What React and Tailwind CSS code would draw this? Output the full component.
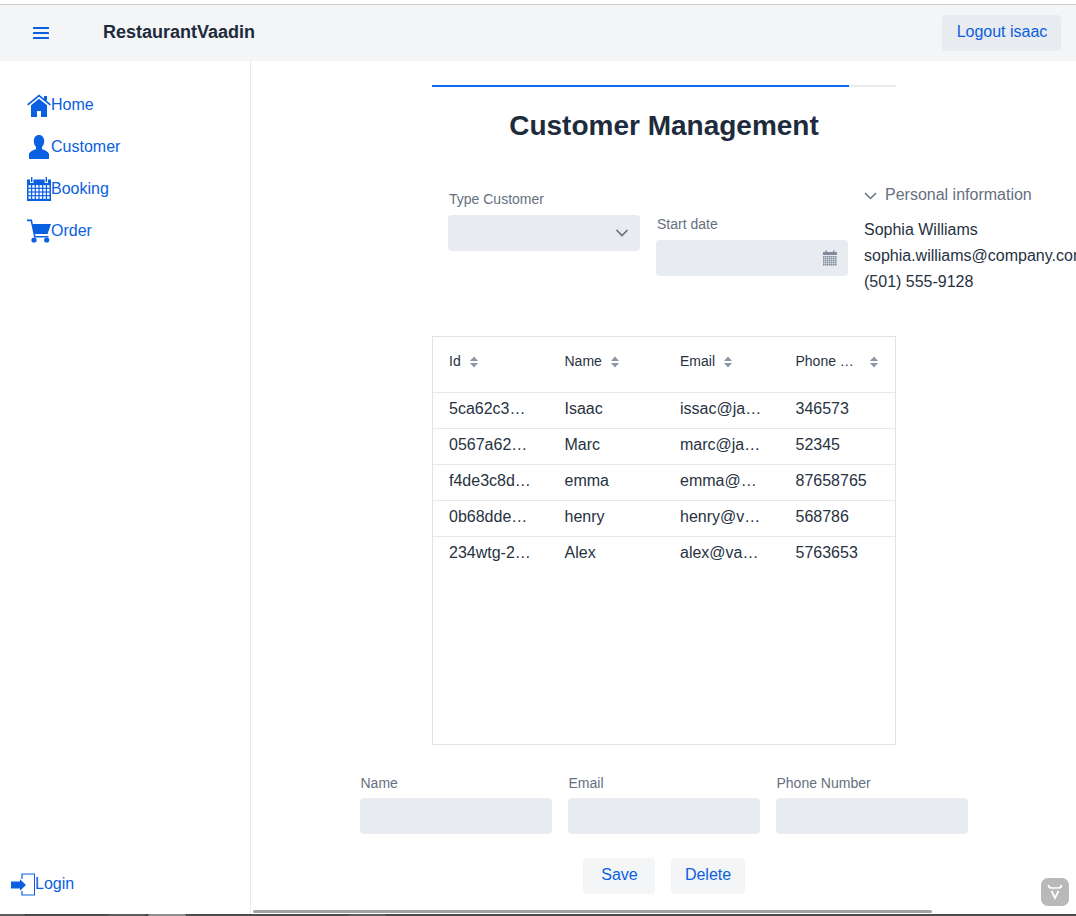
const blue = "#0a60e0";

function Field({ label, labelClass = "mb-[6px]", children }) {
  return (
    <div className="flex flex-col w-[192px]">
      <label className={`text-[14px] leading-[18px] text-[#667080] pl-[1px] ${labelClass}`}>{label}</label>
      <div className="h-[36px] rounded-[4px] bg-[#e8ebef] flex items-center justify-end pr-[11px]">{children}</div>
    </div>
  );
}

function Sort() {
  return (
    <svg width="8" height="12" viewBox="0 0 8 12" className="shrink-0" fill="#8b95a5">
      <path d="M4 0.5 8 5H0z" />
      <path d="M0 7h8l-4 4.500z" />
    </svg>
  );
}

const rows = [
  ["5ca62c3…", "Isaac", "issac@ja…", "346573"],
  ["0567a62…", "Marc", "marc@ja…", "52345"],
  ["f4de3c8d…", "emma", "emma@…", "87658765"],
  ["0b68dde…", "henry", "henry@v…", "568786"],
  ["234wtg-2…", "Alex", "alex@va…", "5763653"],
];

function Nav({ icon, label }) {
  return (
    <a className="flex items-center h-[42px] text-[16px] text-[#0a60e0]">
      {icon}
      <span>{label}</span>
    </a>
  );
}

const HomeI = (
  <svg width="24" height="24" viewBox="0 0 24 24" fill={blue}>
    <path d="M0.600 11.800 12 2.500l11.400 9.300" fill="none" stroke={blue} strokeWidth="1.700" />
    <rect x="17" y="3" width="3" height="4.500" />
    <path d="M12 5.800 20 12.300V24h-6v-6h-4v6H4V12.300z" />
  </svg>
);
const UserI = (
  <svg width="24" height="24" viewBox="0 0 24 24" fill={blue}>
    <path d="M12 0c3.200 0 5.200 2.600 5.200 6 0 2.600-.9 4.600-2.200 6v2.200c3 .9 6.300 2.200 7 4.800v5H2v-5c.7-2.600 4-3.900 7-4.800V12c-1.300-1.400-2.200-3.400-2.200-6 0-3.400 2-6 5.200-6z" />
  </svg>
);
const CalI = (
  <svg width="24" height="24" viewBox="0 0 24 24">
    <rect x="0" y="2.500" width="24" height="21.500" fill={blue} />
    <rect x="3" y="0" width="3.400" height="6" fill="white" />
    <rect x="17.600" y="0" width="3.400" height="6" fill="white" />
    <rect x="4" y="0" width="1.400" height="5" fill={blue} />
    <rect x="18.600" y="0" width="1.400" height="5" fill={blue} />
    {[8.200, 11.900, 15.600, 19.300].map((y) =>
      [1.500, 5.200, 8.900, 12.600, 16.300, 20].map((x) => (
        <rect key={`${x}-${y}`} x={x} y={y} width="2.500" height="2.500" fill="white" />
      ))
    )}
  </svg>
);
const CartI = (
  <svg width="24" height="24" viewBox="0 0 24 24" fill={blue}>
    <path d="M0 0.500h5l.8 4.500H24l-3.500 10H8l.5 2h13v1.600H7.200L3.700 2.200H0z" />
    <circle cx="7" cy="21" r="2.600" />
    <circle cx="19.700" cy="21" r="2.600" />
  </svg>
);
const LoginI = (
  <svg width="24" height="24" viewBox="0 0 24 24" fill={blue}>
    <path d="M0 9.500h9V7.300l6 5.700-6 5.700v-2.300H0z" />
    <path d="M11 7V2h12.600v21H11v-4" fill="none" stroke={blue} strokeWidth="1.200" />
  </svg>
);

export default function App() {
  return (
    <div className="w-[1076px] h-[916px] overflow-hidden flex flex-col bg-white font-['Liberation_Sans',sans-serif] text-[#27323f]">
      <div className="h-[5px] shrink-0 bg-white border-b border-[#c8c8c8]" />
      <header className="h-[56px] shrink-0 bg-[#f3f5f7] flex items-center">
        <button className="w-[26px] ml-[28px] flex justify-center">
          <svg width="18" height="14" viewBox="0 0 18 14" fill={blue}>
            <rect x="1" y="1" width="16" height="2" rx="0.500" />
            <rect x="1" y="6" width="16" height="2" rx="0.500" />
            <rect x="1" y="11" width="16" height="2" rx="0.500" />
          </svg>
        </button>
        <h1 className="ml-[49px] pb-[2px] text-[18px] font-bold leading-none text-[#1e2b3c]">RestaurantVaadin</h1>
        <button className="ml-auto mr-[15px] w-[119px] h-[36px] pb-[2px] pl-[1px] rounded-[4px] bg-[#e8ebef] text-[16px] text-[#0a60e0]">Logout isaac</button>
      </header>
      <div className="flex-1 flex min-h-0">
        <aside className="w-[251px] shrink-0 border-r border-[#e6e8eb] flex flex-col justify-between">
          <nav className="pt-[23px] pl-[27px]">
            <Nav icon={HomeI} label="Home" />
            <Nav icon={UserI} label="Customer" />
            <Nav icon={CalI} label="Booking" />
            <Nav icon={CartI} label="Order" />
          </nav>
          <div className="pl-[11px] pb-[9px]">
            <Nav icon={LoginI} label="Login" />
          </div>
        </aside>
        <main className="flex-1 min-w-0 relative overflow-hidden">
          <div className="ml-[181px] mt-[24px] w-[464px] h-[2px] bg-[#e8ebef]">
            <div className="h-full w-[417px] bg-[#0b6bf0]" />
          </div>
          <h2 className="mt-[21px] ml-[181px] w-[464px] text-center text-[28px] leading-[36px] font-bold text-[#1e2b3c]">Customer Management</h2>
          <div className="flex mt-[39px] ml-[197px] items-start w-[640px]">
            <div className="mt-[7px]">
              <Field label="Type Customer" labelClass="mb-[7px]">
                <svg width="14" height="8" viewBox="0 0 14 8" fill="none" stroke="#667080" strokeWidth="1.700"><path d="M1.500 1 7 6.500 12.500 1" /></svg>
              </Field>
            </div>
            <div className="ml-[16px] mt-[32px]">
              <Field label="Start date" labelClass="mb-[7px]">
                <svg width="16" height="17" viewBox="0 0 16 17" fill="#7f8a9a" className="-mr-[1px]">
                  <rect x="1" y="2" width="14" height="3" />
                  <rect x="3.500" y="0.500" width="1.500" height="2" />
                  <rect x="11" y="0.500" width="1.500" height="2" />
                  {[6, 8, 10, 12, 14].map((y) =>
                    [1, 3, 5, 7, 9, 11, 13].map((x) => (
                      <rect key={`${x}-${y}`} x={x} y={y} width="1.500" height="1.500" />
                    ))
                  )}
                </svg>
              </Field>
            </div>
            <div className="ml-[16px] w-[260px] shrink-0 whitespace-nowrap">
              <div className="flex items-center h-[24px] text-[16px] text-[#667080]">
                <svg width="13" height="8" viewBox="0 0 13 8" fill="none" stroke="#667080" strokeWidth="1.500" className="mr-[8px] mt-[2px]"><path d="M1 1 6.500 6.500 12 1" /></svg>
                Personal information
              </div>
              <div className="mt-[10px] text-[16px] leading-[26px]">
                <div>Sophia Williams</div>
                <div>sophia.williams@company.com</div>
                <div>(501) 555-9128</div>
              </div>
            </div>
          </div>
          <div className="ml-[181px] mt-[41px] w-[464px] h-[409px] border border-[#dfe2e7] text-[16px]">
            <div className="grid grid-cols-4 h-[56px] border-b border-[#e6e8eb] items-center text-[14px] pb-[6px]">
              <div className="flex items-center gap-[9px] pl-[16px]">Id <Sort /></div>
              <div className="flex items-center gap-[9px] pl-[16px]">Name <Sort /></div>
              <div className="flex items-center gap-[9px] pl-[16px]">Email <Sort /></div>
              <div className="flex items-center justify-between pl-[16px] pr-[17px]">Phone … <Sort /></div>
            </div>
            {rows.map((r, i) => (
              <div key={r[0]} className={`grid grid-cols-4 h-[36px] pb-[4px] items-center whitespace-nowrap ${i < 4 ? "border-b border-[#e6e8eb]" : ""}`}>
                {r.map((c) => <div key={c} className="pl-[16px]">{c}</div>)}
              </div>
            ))}
          </div>
          <div className="flex justify-center gap-[16px] mt-[29px] w-[825px]">
            <Field label="Name" />
            <Field label="Email" />
            <Field label="Phone Number" />
          </div>
          <div className="flex justify-center gap-[16px] mt-[24px] w-[825px]">
            <button className="w-[72px] h-[36px] pb-[2px] pl-[2px] rounded-[4px] bg-[#f3f5f7] text-[16px] text-[#0a60e0]">Save</button>
            <button className="w-[74px] h-[36px] pb-[2px] pl-[1px] rounded-[4px] bg-[#f3f5f7] text-[16px] text-[#0a60e0]">Delete</button>
          </div>
          <div className="absolute left-[2px] bottom-[1px] h-[3px] w-[679px] rounded-full bg-[#a3a3a3]" />
          <div className="absolute right-[7px] bottom-[8px] w-[28px] h-[28px] rounded-[7px] bg-[#b9b9b9] flex items-center justify-center">
            <svg width="16" height="16" viewBox="0 0 16 16" fill="none" stroke="white" strokeWidth="1.700">
              <path d="M1.500 1c0 2 1 3 3 3h7c2 0 3-1 3-3" />
              <path d="M4.500 7 8 14l3.500-7" />
            </svg>
          </div>
        </main>
      </div>
      <div className="h-[2px] shrink-0 bg-[#4a4a4a] relative">
        <div className="absolute left-[148px] top-0 w-[38px] h-[2px] rounded-t-[2px] bg-[#8f8f8f]" />
        <div className="absolute left-[108px] top-0 w-[38px] h-[2px] rounded-t-[2px] bg-[#5c5c5c]" />
        <div className="absolute left-0 top-0 w-[25px] h-[2px] rounded-tr-[2px] bg-[#5c5c5c]" />
        <div className="absolute left-[348px] top-0 w-[38px] h-[2px] rounded-t-[2px] bg-[#5c5c5c]" />
      </div>
    </div>
  );
}
